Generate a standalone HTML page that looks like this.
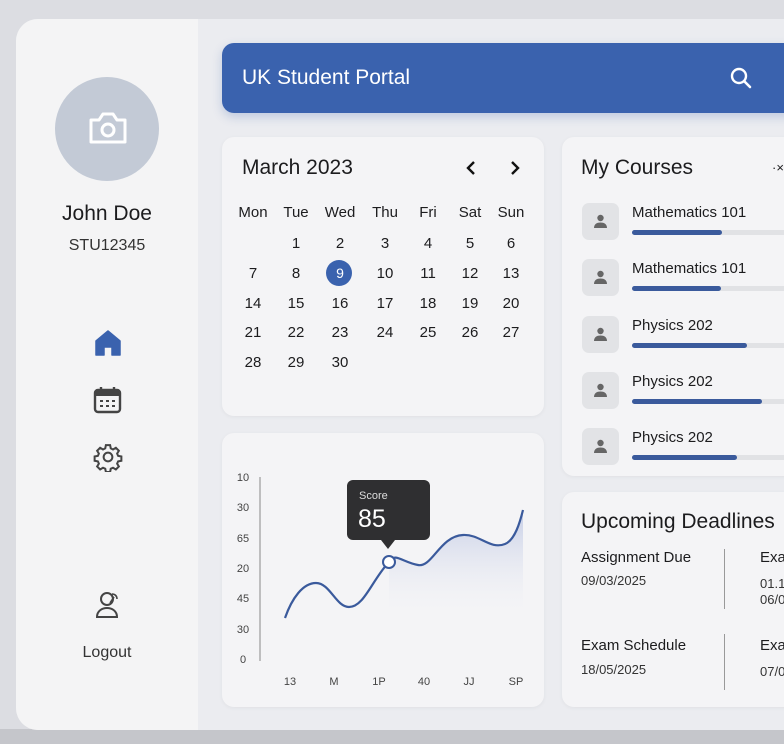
<!DOCTYPE html>
<html><head><meta charset="utf-8"><style>
*{margin:0;padding:0;box-sizing:border-box}
body{width:784px;height:744px;overflow:hidden;background:#dcdde2;font-family:"Liberation Sans",sans-serif;color:#1c1c1e;position:relative}
.a{position:absolute}
.card{position:absolute;background:#f4f4f6;border-radius:12px;box-shadow:0 1px 4px rgba(0,0,0,.05)}
.t{position:absolute;white-space:nowrap}
.c{position:absolute;transform:translateX(-50%);font-size:15px;white-space:nowrap}
</style></head><body>
<div class="a" style="left:0;top:729px;width:784px;height:15px;background:#c5c6cb"></div>
<div class="a" style="left:16px;top:19px;width:800px;height:711px;background:#ebecf0;border-radius:22px 0 0 22px;overflow:hidden">
  <div class="a" style="left:0;top:0;width:182px;height:711px;background:#f4f4f5"></div>
</div>
<!-- sidebar -->
<div class="a" style="left:55px;top:77px;width:104px;height:104px;border-radius:50%;background:#c3cad6"></div>
<svg class="a" style="left:87px;top:110px" width="42" height="38" viewBox="0 0 42 38"><path d="M4 10h8l4-6h10l4 6h8v22H4z" fill="none" stroke="#fff" stroke-width="3" stroke-linejoin="round"/><circle cx="21" cy="20" r="6" fill="none" stroke="#fff" stroke-width="3"/></svg>
<div class="t" style="left:0;width:214px;text-align:center;top:202px;font-size:21px">John Doe</div>
<div class="t" style="left:0;width:214px;text-align:center;top:237px;font-size:16px;color:#333">STU12345</div>
<svg class="a" style="left:94px;top:329px" width="28" height="28" viewBox="0 0 28 28"><path d="M14 2L2 12v14h8v-8h8v8h8V12z" fill="#3a62ae" stroke="#3a62ae" stroke-width="1.5" stroke-linejoin="round"/></svg>
<svg class="a" style="left:93px;top:385px" width="29" height="30" viewBox="0 0 29 30"><rect x="2" y="5" width="25" height="22" rx="3" fill="none" stroke="#444" stroke-width="2.4"/><rect x="2" y="5" width="25" height="6" fill="#444"/><path d="M8 2v6M21 2v6" stroke="#444" stroke-width="2.4"/><g fill="#444"><rect x="7" y="15" width="3" height="2"/><rect x="13" y="15" width="3" height="2"/><rect x="19" y="15" width="3" height="2"/><rect x="7" y="20" width="3" height="2"/><rect x="13" y="20" width="3" height="2"/><rect x="19" y="20" width="3" height="2"/></g></svg>
<svg class="a" style="left:93px;top:442px" width="30" height="30" viewBox="0 0 24 24"><path fill="none" stroke="#444" stroke-width="1.6" d="M10.3 2.5h3.4l.5 2.6 1.8.9 2.3-1.4 2.4 2.4-1.4 2.3.8 1.8 2.6.5v3.4l-2.6.5-.8 1.8 1.4 2.3-2.4 2.4-2.3-1.4-1.8.8-.5 2.6h-3.4l-.5-2.6-1.8-.8-2.3 1.4-2.4-2.4 1.4-2.3-.8-1.8-2.6-.5v-3.4l2.6-.5.8-1.8-1.4-2.3 2.4-2.4 2.3 1.4 1.8-.9z"/><circle cx="12" cy="12" r="3.5" fill="none" stroke="#444" stroke-width="1.6"/></svg>
<svg class="a" style="left:94px;top:590px" width="28" height="30" viewBox="0 0 28 30"><circle cx="13" cy="9" r="6" fill="none" stroke="#444" stroke-width="2"/><path d="M3 27c0-6 5-9 10-9s10 3 10 9z" fill="none" stroke="#444" stroke-width="2"/><path d="M18 4c3 0 5 2 5 5M16 13l4-6" stroke="#444" stroke-width="1.6" fill="none"/></svg>
<div class="t" style="left:0;width:214px;text-align:center;top:644px;font-size:16px;color:#333">Logout</div>
<!-- header -->
<div class="a" style="left:222px;top:43px;width:580px;height:70px;background:#3a62ae;border-radius:12px;box-shadow:0 4px 10px rgba(58,98,174,.25)"></div>
<div class="t" style="left:242px;top:66px;font-size:21px;color:#fff">UK Student Portal</div>
<svg class="a" style="left:729px;top:66px" width="24" height="24" viewBox="0 0 24 24"><circle cx="10" cy="10" r="7" fill="none" stroke="#fff" stroke-width="2.4"/><path d="M15 15l6 6" stroke="#fff" stroke-width="2.6" stroke-linecap="round"/></svg>
<!-- calendar -->
<div class="card" style="left:222px;top:137px;width:322px;height:279px"></div>
<div class="t" style="left:242px;top:156px;font-size:21px">March 2023</div>
<svg class="a" style="left:465px;top:160px" width="60" height="16" viewBox="0 0 60 16"><path d="M9 2L3 8l6 6M47 2l6 6-6 6" fill="none" stroke="#111" stroke-width="2.4"/></svg>
<div class="a" style="left:326px;top:260px;width:26px;height:26px;border-radius:50%;background:#3a62ae"></div>
<div id="cal"></div>
<!-- chart -->
<div class="card" style="left:222px;top:433px;width:322px;height:274px"></div>
<div id="ax"></div>
<svg class="a" style="left:0;top:0" width="784" height="744">
<defs><linearGradient id="g" x1="0" y1="0" x2="0" y2="1"><stop offset="0" stop-color="#c5cde6"/><stop offset="1" stop-color="#f4f4f6" stop-opacity="0"/></linearGradient></defs>
<path d="M389 562C395 552 402 562 418 565C432 568 440 536 463 535C480 534 490 550 505 544C515 540 520 522 523 510V620H389Z" fill="url(#g)"/>
<path d="M285 618C292 598 303 583 316 583C330 583 336 607 349 607C364 607 372 580 389 562C395 552 402 562 418 565C432 568 440 536 463 535C480 534 490 550 505 544C515 540 520 522 523 510" fill="none" stroke="#3a5a9c" stroke-width="2.2"/>
<line x1="260" y1="477" x2="260" y2="661" stroke="#888" stroke-width="1"/>
<circle cx="389" cy="562" r="6" fill="#fff" stroke="#3a5a9c" stroke-width="2"/>
<rect x="347" y="480" width="83" height="60" rx="6" fill="#2f2f31"/>
<path d="M381 540L388 549L395 540Z" fill="#2f2f31"/>
<text x="359" y="499" font-size="11" fill="#ddd" font-family="Liberation Sans">Score</text>
<text x="358" y="527" font-size="25" fill="#fff" font-family="Liberation Sans">85</text>
</svg>
<!-- courses -->
<div class="card" style="left:562px;top:137px;width:240px;height:339px"></div>
<div class="t" style="left:581px;top:156px;font-size:21px">My Courses</div>
<div class="t" style="left:772px;top:160px;font-size:13px">·×</div>
<div id="co"></div>
<!-- deadlines -->
<div class="card" style="left:562px;top:492px;width:240px;height:215px"></div>
<div class="t" style="left:581px;top:510px;font-size:21px">Upcoming Deadlines</div>
<div class="t" style="left:581px;top:549px;font-size:15px">Assignment Due</div>
<div class="t" style="left:581px;top:573px;font-size:13px;color:#333">09/03/2025</div>
<div class="t" style="left:581px;top:637px;font-size:15px">Exam Schedule</div>
<div class="t" style="left:581px;top:662px;font-size:13px;color:#333">18/05/2025</div>
<div class="a" style="left:724px;top:549px;width:1px;height:60px;background:#999"></div>
<div class="a" style="left:724px;top:634px;width:1px;height:56px;background:#999"></div>
<div class="t" style="left:760px;top:549px;font-size:15px">Exam</div>
<div class="t" style="left:760px;top:576px;font-size:13px;color:#333;line-height:16px">01.1<br>06/0</div>
<div class="t" style="left:760px;top:637px;font-size:15px">Exam</div>
<div class="t" style="left:760px;top:664px;font-size:13px;color:#333">07/0</div>
<script>
var xs=[253,296,340,385,428,470,511],h='';
['Mon','Tue','Wed','Thu','Fri','Sat','Sun'].forEach(function(d,i){h+='<div class="c" style="left:'+xs[i]+'px;top:204px">'+d+'</div>'});
var ys=[235,265,295,324,354];
for(var n=1;n<=30;n++){var p=n;var r=Math.floor(p/7),c=p%7;h+='<div class="c" style="left:'+xs[c]+'px;top:'+ys[r]+'px;'+(n==9?'color:#fff;font-size:14px':'')+'">'+n+'</div>'}
document.getElementById('cal').innerHTML=h;
h='';['10','30','65','20','45','30','0'].forEach(function(v,i){h+='<div class="c" style="left:243px;top:'+(472+i*30.3)+'px;font-size:11px;color:#444">'+v+'</div>'});
[[290,'13'],[334,'M'],[379,'1P'],[424,'40'],[469,'JJ'],[516,'SP']].forEach(function(a){h+='<div class="c" style="left:'+a[0]+'px;top:676px;font-size:11px;color:#444">'+a[1]+'</div>'});
document.getElementById('ax').innerHTML=h;
h='';[['Mathematics 101',90],['Mathematics 101',89],['Physics 202',115],['Physics 202',130],['Physics 202',105]].forEach(function(a,i){var y=203+i*56.3;
h+='<div class="a" style="left:582px;top:'+y+'px;width:37px;height:37px;border-radius:7px;background:#e2e3e6"></div>';
h+='<svg class="a" style="left:592px;top:'+(y+10)+'px" width="17" height="17" viewBox="0 0 17 17"><circle cx="8.5" cy="5" r="3.2" fill="#666"/><path d="M2 15c0-4 3-5.5 6.5-5.5S15 11 15 15z" fill="#666"/></svg>';
h+='<div class="t" style="left:632px;top:'+(y+1)+'px;font-size:15px">'+a[0]+'</div>';
h+='<div class="a" style="left:632px;top:'+(y+27)+'px;width:170px;height:5px;border-radius:3px;background:#e1e2e5"></div>';
h+='<div class="a" style="left:632px;top:'+(y+27)+'px;width:'+a[1]+'px;height:5px;border-radius:3px;background:#3a5a9c"></div>'});
document.getElementById('co').innerHTML=h;
</script>
</body></html>
